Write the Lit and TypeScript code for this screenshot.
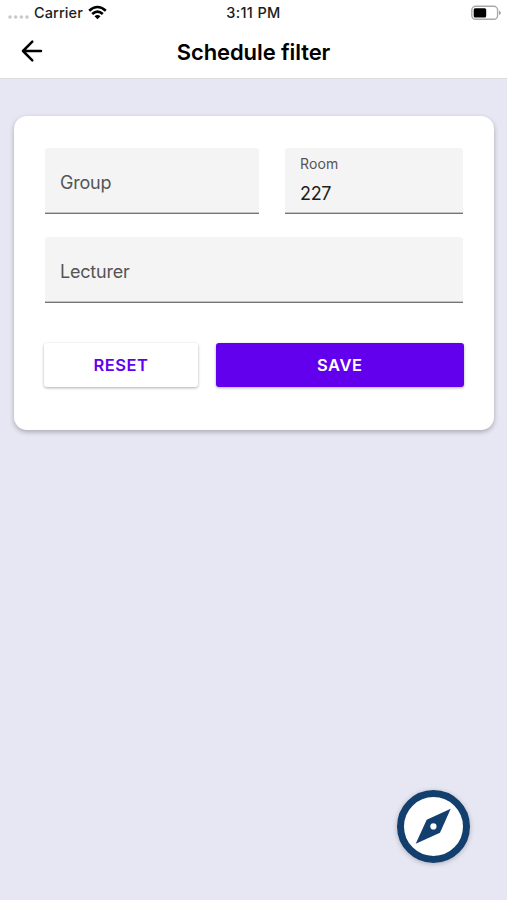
import { LitElement, html, css, nothing } from "lit";
import { customElement, property } from "lit/decorators.js";

@customElement("filter-field")
class FilterField extends LitElement {
  @property() label = "";
  @property() value = "";

  static styles = css`
    :host { display: block; min-width: 0; }
    .field {
      box-sizing: border-box;
      height: 66px;
      padding: 0 15px;
      display: flex;
      flex-direction: column;
      justify-content: center;
      background: #f4f4f4;
      border-bottom: 1px solid #747474;
      box-shadow: inset 0 -1px #c4c4c4;
      border-radius: 4px 4px 0 0;
    }
    .label { font-size: 18px; line-height: 24px; color: #545454; padding-top: 4px; letter-spacing: -0.2px; }
    .filled { justify-content: flex-start; }
    .filled .label { font-size: 14px; line-height: 18px; padding-top: 7px; letter-spacing: 0.1px; }
    .value { font-size: 18px; line-height: 24px; padding-top: 9px; color: #1d1d1d; letter-spacing: -0.3px; }
  `;

  render() {
    return html`<div class="field ${this.value ? "filled" : ""}">
      <div class="label">${this.label}</div>
      ${this.value ? html`<div class="value">${this.value}</div>` : nothing}
    </div>`;
  }
}

@customElement("app-root")
class AppRoot extends LitElement {
  static styles = css`
    :host {
      display: flex;
      flex-direction: column;
      position: relative;
      width: 507px;
      height: 900px;
      overflow: hidden;
      background: #e7e7f3;
      font-family: Inter, "Liberation Sans", sans-serif;
      color: #000;
    }
    svg { display: block; flex: none; }
    .top { height: 78px; background: #fff; border-bottom: 1px solid #dcdcdf; flex: none; }
    .status {
      display: grid;
      grid-template-columns: 1fr auto 1fr;
      align-items: center;
      height: 25px;
      padding: 0 6px 0 8px;
      font-size: 14.5px;
      font-weight: 450;
      letter-spacing: 0.1px;
      color: #1c1c1c;
    }
    .carrier { display: flex; align-items: center; }
    .name { margin: 0 5px 0 5px; }
    .time { letter-spacing: 0.35px; margin-right: 2px; }
    .battery { justify-self: end; }
    .nav {
      display: grid;
      grid-template-columns: 1fr auto 1fr;
      align-items: center;
      height: 52px;
      padding: 0 20px;
    }
    .title { margin: 0; padding-top: 1px; font-size: 22px; line-height: 28px; font-weight: 600; letter-spacing: -0.1px; }
    .card {
      box-sizing: border-box;
      height: 314px;
      margin: 37px 13px 0 13.5px;
      padding: 32px 31.5px 0;
      background: #fff;
      border-radius: 13px;
      box-shadow: 0 2px 5px rgba(0, 0, 0, 0.27);
    }
    .row { display: grid; grid-template-columns: 214px 1fr; gap: 26px; margin-bottom: 23px; }
    .actions {
      display: grid;
      grid-template-columns: 154px 1fr;
      gap: 18px;
      margin: 40px -1px 0 -1px;
    }
    button {
      height: 44px;
      padding: 0;
      border: 0;
      border-radius: 3px;
      font: 600 16.5px/44px Inter, "Liberation Sans", sans-serif;
      letter-spacing: 0.55px;
      background: #fff;
      color: #6200ee;
      box-shadow: 0 1px 3px rgba(0, 0, 0, 0.32);
    }
    .primary { background: #6200ee; color: #fff; }
    .compass {
      position: absolute;
      right: 37px;
      bottom: 37px;
      width: 73px;
      height: 73px;
      border-radius: 50%;
      box-shadow: 0 1px 5px rgba(0, 0, 0, 0.25);
    }
  `;

  render() {
    return html`
      <header class="top">
        <div class="status">
          <div class="carrier">
            <svg width="21" height="12" viewBox="0 0 21 12" fill="#c9c9c9">
              <circle cx="2" cy="10" r="1.8" /><circle cx="7.7" cy="10" r="1.8" />
              <circle cx="13.3" cy="10" r="1.8" /><circle cx="19" cy="10" r="1.8" />
            </svg>
            <span class="name">Carrier</span>
            <svg width="19" height="15" viewBox="0 0 19 15" fill="none" stroke="#000" stroke-width="2.6">
              <path d="M1.2 5.7Q9.5-1.7 17.8 5.7" />
              <path d="M4.2 9Q9.5 4.2 14.8 9" />
              <path d="M9.5 14.2L6.5 11.2Q9.5 8.8 12.5 11.2Z" fill="#000" stroke="none" />
            </svg>
          </div>
          <span class="time">3:11 PM</span>
          <svg class="battery" width="30" height="16" viewBox="0 0 30 16">
            <rect x="0.8" y="1.3" width="25.8" height="13" rx="3.8" fill="#fff" stroke="#a9a9a9" stroke-width="1.4" />
            <rect x="2.7" y="3.2" width="12.5" height="9.2" rx="1.5" />
            <path d="M28 5.7Q29.8 6.3 29.8 7.9T28 10.1Z" fill="#a0a0a0" />
          </svg>
        </div>
        <div class="nav">
          <svg width="24" height="24" viewBox="0 0 24 24" fill="none" stroke="#000" stroke-width="2.5" stroke-linecap="round" stroke-linejoin="round">
            <path d="M21 12H3M12.3 2.7L3 12L12.3 21.3" />
          </svg>
          <h1 class="title">Schedule filter</h1>
        </div>
      </header>
      <main class="card">
        <div class="row">
          <filter-field label="Group"></filter-field>
          <filter-field label="Room" value="227"></filter-field>
        </div>
        <filter-field label="Lecturer"></filter-field>
        <div class="actions">
          <button>RESET</button>
          <button class="primary">SAVE</button>
        </div>
      </main>
      <div class="compass">
        <svg width="73" height="73" viewBox="0 0 73 73">
          <circle cx="36.5" cy="36.5" r="33" fill="#fff" stroke="#123f6d" stroke-width="7" />
          <path d="M53.7 18.7L29.7 29.7L18.7 53.7L43 42.7Z" fill="#123f6d" />
          <circle cx="36.4" cy="36.4" r="3.1" fill="#fff" />
        </svg>
      </div>
    `;
  }
}
